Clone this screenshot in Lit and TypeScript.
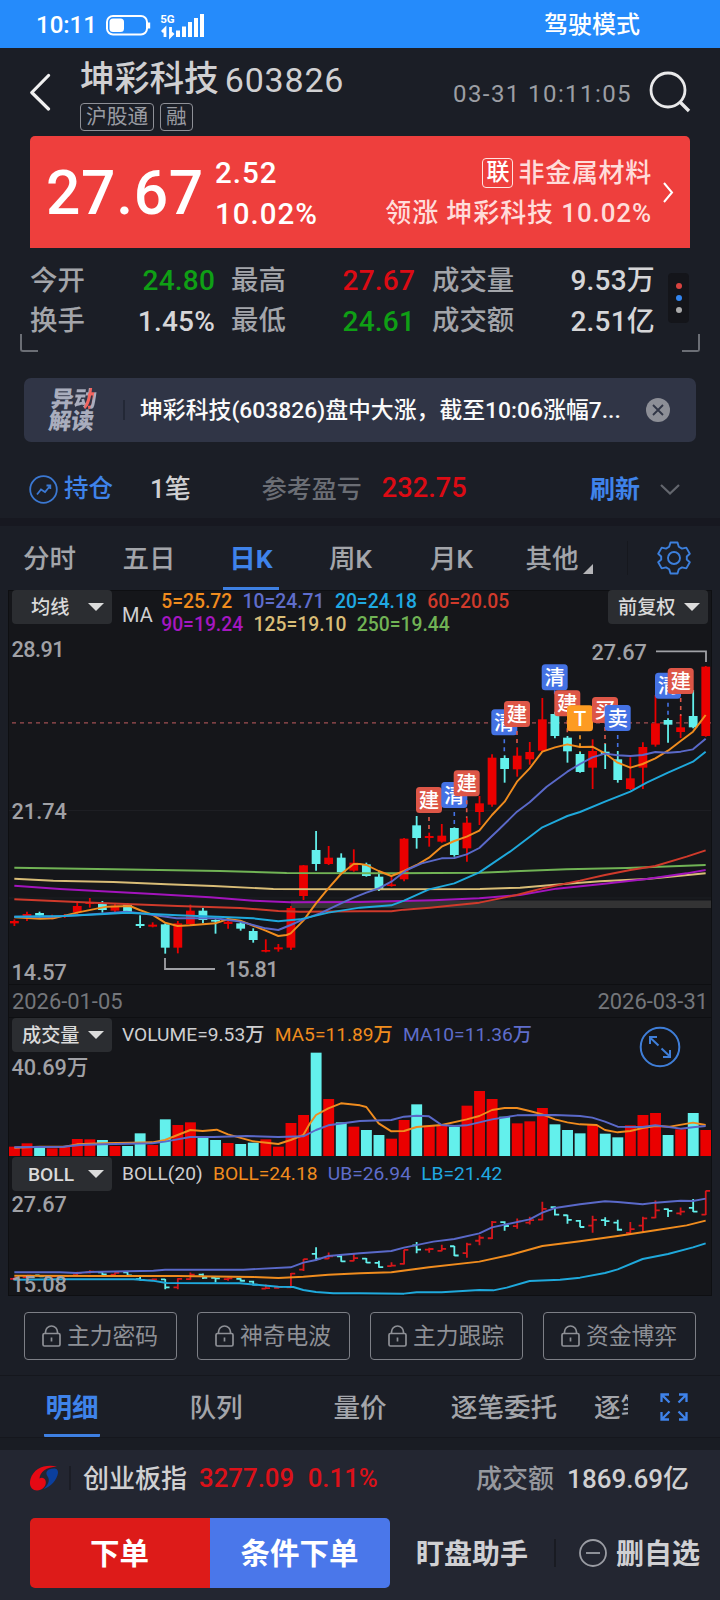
import { LitElement, html, svg, css } from "lit";
import { customElement } from "lit/decorators.js";

// Candle rows: [direction, high, body top, body bottom, low], in third-pixels below y=640.
type Candle = [string, number, number, number, number];
const CANDLES: Candle[] = [
  ["r", 838, 843, 850, 858], ["r", 815, 822, 834, 843], ["c", 815, 819, 827, 833], ["r", 824, 828, 835, 838],
  ["r", 822, 825, 831, 834], ["r", 788, 798, 817, 822], ["r", 774, 786, 792, 803], ["c", 783, 792, 810, 818],
  ["r", 792, 797, 812, 816], ["c", 790, 793, 820, 822], ["c", 826, 852, 858, 864], ["r", 847, 854, 860, 862],
  ["c", 850, 853, 923, 941], ["r", 843, 850, 923, 940], ["r", 794, 812, 852, 858], ["c", 803, 812, 840, 850],
  ["c", 838, 840, 845, 881], ["r", 838, 845, 852, 866], ["c", 845, 850, 866, 872], ["c", 865, 873, 900, 908],
  ["r", 898, 930, 935, 937], ["r", 912, 922, 928, 935], ["r", 798, 804, 923, 930], ["r", 675, 676, 768, 780],
  ["c", 573, 630, 672, 692], ["r", 618, 653, 672, 675], ["c", 640, 653, 697, 700], ["r", 628, 668, 692, 695],
  ["c", 668, 673, 708, 710], ["c", 692, 710, 747, 753], ["r", 705, 733, 738, 740], ["r", 594, 596, 718, 724],
  ["c", 528, 556, 594, 626], ["r", 578, 588, 594, 620], ["r", 552, 587, 605, 608], ["c", 562, 564, 645, 650],
  ["r", 534, 548, 625, 665], ["r", 468, 490, 516, 555], ["r", 343, 353, 494, 500], ["c", 346, 354, 387, 428],
  ["r", 322, 347, 388, 410], ["r", 306, 336, 358, 374], ["r", 174, 238, 332, 336], ["c", 215, 222, 288, 295],
  ["c", 288, 293, 334, 368], ["c", 335, 342, 396, 398], ["r", 298, 333, 383, 447], ["c", 310, 335, 345, 387],
  ["c", 333, 358, 420, 428], ["r", 352, 415, 447, 450], ["r", 307, 321, 383, 447], ["r", 165, 250, 314, 320],
  ["c", 235, 240, 254, 308], ["r", 225, 262, 276, 294], ["c", 150, 228, 262, 265], ["r", 78, 80, 288, 290],
];
// Bar tops in third-pixels below y=980.
const VOLUMES = [
  500, 490, 504, 505, 498, 477, 478, 480, 498, 498, 460, 495, 418, 435, 427, 474, 480, 489, 492, 488, 478, 500, 429,
  405, 218, 357, 427, 440, 450, 465, 476, 420, 373, 437, 437, 440, 377, 333, 357, 410, 430, 424, 384, 433, 450, 460,
  434, 461, 472, 436, 405, 399, 465, 448, 399, 450,
];
const MA: [string, string][] = [
  ["#71b355", "43,683 340,688 660,693 860,699 1180,700 1440,698 1700,688 1880,684 2117,675"],
  ["#d9bd77", "43,716 160,722 340,726 500,733 640,738 820,747 1080,748 1440,747 1560,743 1700,731 1800,724 1940,717 2117,700"],
  ["#a314bd", "43,737 180,747 460,762 630,772 760,782 870,787 1080,786 1174,784 1300,781 1438,775 1560,765 1670,746 1800,733 1940,717 2060,700 2117,690"],
  ["#d03a2b", "43,778 300,789 533,798 720,804 835,813 900,815 1080,814 1174,814 1212,809 1290,803 1363,796 1438,788 1550,765 1627,745 1740,722 1815,705 1891,690 1966,678 2060,650 2117,631"],
  ["#f08c1e", "43,832 120,836 160,835 231,818 320,800 390,798 419,810 457,824 495,848 533,858 571,856 646,850 684,837 721,842 797,872 835,888 860,885 872,880 910,842 948,790 985,745 1023,702 1061,672 1080,672 1099,675 1136,693 1174,708 1212,693 1250,675 1287,653 1325,620 1363,603 1400,590 1438,572 1476,525 1514,485 1551,425 1589,385 1627,335 1665,322 1702,313 1740,321 1777,320 1815,340 1853,368 1891,383 1928,372 1966,355 2004,332 2042,303 2079,275 2098,250 2117,225"],
  ["#5a69c9", "43,830 150,830 260,824 380,815 440,822 530,835 646,835 720,845 797,865 835,870 872,855 910,838 960,820 1023,790 1061,773 1099,758 1136,745 1174,725 1220,690 1265,670 1325,655 1363,654 1400,643 1438,624 1495,570 1551,515 1589,487 1640,440 1702,395 1740,372 1777,352 1815,341 1853,346 1891,348 1928,345 1966,336 2004,338 2042,335 2079,328 2117,296"],
  ["#1fa9dc", "43,830 190,828 300,823 380,818 533,826 650,830 760,835 835,844 900,838 985,818 1080,803 1174,796 1212,782 1287,748 1363,730 1438,697 1530,635 1627,562 1665,545 1702,528 1740,516 1815,485 1891,455 1940,428 2004,398 2079,365 2117,335"],
];
const VOL_MA: [string, string][] = [
  ["#f08c1e", "43,503 120,500 193,500 231,493 307,490 395,488 457,487 495,480 533,465 571,450 608,453 650,449 684,463 760,484 800,488 835,492 872,480 910,465 930,430 948,405 985,385 1023,370 1080,376 1099,381 1136,430 1174,454 1212,453 1250,441 1325,435 1400,418 1438,408 1476,390 1514,384 1551,384 1589,393 1627,403 1665,418 1702,427 1740,433 1790,435 1815,450 1853,457 1891,453 1928,444 1966,438 2010,440 2079,428 2117,435"],
  ["#5a69c9", "43,502 190,500 240,495 307,493 457,490 495,485 571,471 640,471 740,468 835,471 910,469 948,450 985,436 1080,423 1174,420 1212,410 1250,407 1287,409 1325,435 1363,438 1400,436 1476,418 1551,406 1665,405 1740,408 1777,413 1815,425 1853,440 1928,441 1966,436 2042,446 2079,442 2117,438"],
];
const BOLL: [string, string][] = [
  ["#5a69c9", "43,877 180,877 230,879 270,876 460,872 495,869 730,869 872,862 910,848 948,840 985,828 1080,820 1174,813 1212,803 1300,785 1363,777 1438,760 1476,742 1589,718 1627,698 1665,684 1740,673 1815,664 1853,666 1928,673 1966,668 2042,662 2079,663 2117,656"],
  ["#f08c1e", "43,887 300,888 533,888 760,891 835,894 910,890 985,884 1080,880 1174,877 1287,862 1438,845 1530,825 1627,798 1740,784 1853,768 1966,751 2060,736 2117,722"],
  ["#1fa9dc", "43,899 190,898 400,898 457,902 500,909 720,910 835,920 880,921 910,930 948,936 1000,940 1080,940 1212,941 1250,937 1325,937 1438,930 1480,931 1520,923 1589,903 1680,899 1740,893 1815,879 1853,868 1928,837 2004,822 2079,802 2117,790"],
];
// Trade marks: [label, colour, centre x, centre y, stem end y]
const MARKS: [string, string, number, number, number][] = [
  ["建", "#dd5647", 429, 800, 833], ["清", "#4472e4", 454.3, 795, 826], ["建", "#dd5647", 466.7, 783.3, 818],
  ["清", "#4472e4", 504.3, 722.3, 755], ["建", "#dd5647", 517, 714, 747], ["清", "#4472e4", 554.7, 677.3, 690],
  ["建", "#dd5647", 567.3, 703.3, 735], ["T", "#fd9b22", 580, 718.3, 752], ["买", "#dd5647", 605, 710, 744],
  ["卖", "#4472e4", 617.7, 718, 750], ["清", "#4472e4", 668, 685.7, 718], ["建", "#dd5647", 680.7, 681, 716],
];
const RED = "#ea0000";
const CYAN = "#63f0ec";
const tint = (d: string) => (d === "r" ? RED : CYAN);
const cx = (i: number) => 14.4 + 12.57 * i;
const third = (base: number, y: number) => base + y / 3;

const lines = (set: [string, string][], base: number) => svg`
  <g transform=${`translate(0 ${base}) scale(.33333)`} fill="none" stroke-width="5.8" stroke-linejoin="round">
    ${set.map(([c, p]) => svg`<polyline points=${p} stroke=${c}></polyline>`)}
  </g>`;

@customElement("app-root")
export class AppRoot extends LitElement {
  static styles = css`
    :host { display: block; width: 720px; height: 1600px; overflow: hidden; background: #1b1e26; color: #d0d0d2;
      font-family: Roboto, "Noto Sans CJK SC", sans-serif; font-weight: 500; line-height: 1; white-space: nowrap; }
    * { box-sizing: border-box; }
    svg { display: block; flex: none; }
    .row { display: flex; align-items: center; }
    .status { height: 48px; background: #258bfb; color: #fff; padding: 1px 80px 0 36px; font-size: 24px; }
    .clock { width: 70px; font-size: 24px; padding-top: 1px; }
    .five { font-size: 11.5px; font-weight: 700; fill: #fff; }
    .drive { margin-left: auto; }
    .head { height: 88px; padding: 0 29px 0 30px; }
    .title { margin-left: 29px; display: flex; flex-direction: column; gap: 3px; padding-top: 6px; }
    .name { height: 41px; font-size: 34.7px; gap: 6px; }
    .name b { font-weight: 400; font-size: 34px; letter-spacing: .8px; }
    .tags { gap: 6px; font-weight: 400; }
    .tag { height: 28px; border: 1px solid #8e9097; border-radius: 4px; color: #999ba2; font-size: 20.7px; line-height: 26px; padding: 0 5px; }
    .time { margin-left: auto; margin-right: 17px; padding-top: 3px; font-size: 24px; font-weight: 400; letter-spacing: 1.42px; color: #9c9ea4; }
    .card { height: 112px; margin: 0 30px; padding: 0 16px; background: #ee3f3d; border-radius: 5px 5px 0 0; color: #fff; }
    .price { font-size: 60.5px; letter-spacing: .7px; width: 169px; padding-top: 5px; }
    .delta { display: flex; flex-direction: column; gap: 11px; font-size: 29.5px; letter-spacing: 1px; padding-top: 4px; }
    .sector { margin-left: auto; display: flex; flex-direction: column; align-items: flex-end; gap: 7px; margin-right: 11px; font-size: 26px; letter-spacing: .7px; color: #ffdcda; padding-top: 1px; }
    .sector .row { height: 33px; gap: 5px; }
    .sector .lead { letter-spacing: .88px; }
    .link { width: 31px; height: 30px; border: 1px solid #ffe3e1; border-radius: 4px; color: #fff; font-size: 23px; letter-spacing: 0; display: flex; align-items: center; justify-content: center; }
    .stats { height: 102px; display: flex; align-items: flex-start; padding: 13px 30px 0 30px; position: relative; }
    .grid { display: grid; grid-template-columns: 62px 123px 16px 62px 122px 17px 85px 138px; grid-auto-rows: 40.5px; align-items: center; font-size: 27.4px; color: #a3a5aa; }
    .grid i { font-style: normal; font-size: 28px; text-align: right; letter-spacing: .2px; color: #d6d6d8; }
    .grid .g { color: #0f9f15; } .grid .r { color: #dc0b14; }
    .grid .a { grid-column: 1; } .grid .m { grid-column: 4; } .grid .c { grid-column: 7; }
    .dots { margin: 12px 0 0 13px; width: 21px; height: 50px; border-radius: 4px; background: #14151a; display: flex; flex-direction: column; align-items: center; justify-content: center; gap: 6px; }
    .dots span { width: 6px; height: 6px; border-radius: 50%; background: #aaa; }
    .dots .d1 { background: #d8433f; } .dots .d2 { background: #3285f0; }
    .corner { position: absolute; top: 86px; width: 18px; height: 18px; border-bottom: 2px solid #6b6e75; }
    .cl { left: 20px; border-left: 2px solid #6b6e75; border-radius: 0 0 0 3px; }
    .cr { right: 20px; border-right: 2px solid #6b6e75; border-radius: 0 0 3px 0; }
    .news { height: 64px; margin: 28px 24px 0; background: #303546; border-radius: 7px; padding: 0 26px 0 26px; }
    .logo { width: 73px; font-size: 22.7px; line-height: 22px; font-weight: 900; color: #a9adbd; transform: skewX(-7deg); padding-top: 2px; }
    .logo em { font-style: normal; background: linear-gradient(100deg, #a9adbd 54%, #f2655f 56%, #f2655f 76%, #a9adbd 78%); -webkit-background-clip: text; background-clip: text; color: transparent; }
    .news .bar { width: 2px; height: 20px; background: #232836; }
    .news p { margin: 0 0 0 15px; padding-top: 3px; color: #fafafa; font-size: 22.85px; }
    .news svg { margin-left: auto; }
    .hold { height: 92px; padding: 2px 40px 0 29px; }
    .hold .h1 { font-size: 24.5px; margin-left: 6px; padding-top: 1px; }
    .hold .h2 { font-size: 26px; margin-left: 37px; }
    .hold .h3 { font-size: 25px; margin-left: 71px; color: #6b6e75; }
    .hold .h4 { font-size: 27.2px; margin-left: 20px; color: #dc0b14; }
    .hold .h5 { font-size: 25px; margin-left: auto; margin-right: 20px; font-weight: 700; }
    .blue { color: #3f83ea; }
    .sep { height: 8px; margin-top: -16px; background: #171820; }
    .ktabs { height: 64px; font-size: 26.5px; color: #a3a5aa; display: grid; grid-template-columns: 99px 100px 104px 95px 107px 122px 93px; align-items: center; }
    .ktabs > span { text-align: center; padding-top: 3px; }
    .ktabs .on { color: #3f83ea; font-weight: 700; align-self: stretch; display: flex; align-items: center; justify-content: center; justify-self: center; width: 56px; border-bottom: 3px solid #3e80e2; padding-top: 5px; }
    .ktabs .other { padding-right: 24px; }
    .other svg { display: inline-block; margin: 0 -10px 0 4px; vertical-align: -6px; }
    .ktabs .gear { border-left: 1px solid #16181e; display: flex; justify-content: center; }
    .chart { margin: 0 8px; background: #15161a; border-left: 1px solid #0e0f12; border-right: 1px solid #0e0f12; }
    .pane { display: grid; grid-template-columns: 702px; }
    .pane > * { grid-area: 1 / 1; }
    .bar1 { height: 34px; padding: 0 3px; align-self: start; font-size: 19.3px; }
    .sel { width: 100px; height: 34px; border-radius: 4px; background: #2b2d31; color: #dadada; font-size: 19.2px; display: flex; align-items: center; justify-content: space-between; padding: 2px 8px 0 10px; }
    .sel.n { padding-left: 19px; } .sel.w { padding-left: 16px; }
    .tri { width: 0; height: 0; border: 8px solid transparent; border-top: 8px solid #dcdcdc; border-bottom: 0; margin-bottom: 2px; }
    .leg { margin-left: 10px; gap: 10.3px; color: #cfcfd1; height: 32px; font-weight: 450; font-size: 19.2px; }
    .ma { padding-top: 14px; font-size: 20px; }
    .two { margin-left: 8.5px; display: grid; grid-template-rows: 24px 22px; align-self: flex-start; align-items: center; }
    .two .row { gap: 10.4px; }
    .right { margin-left: auto; }
    .o { color: #f08c1e; } .p { color: #5f6dcb; } .b { color: #20a9e2; } .rd { color: #d03a2b; } .v { color: #a517c0; } .y { color: #d9bd77; } .gn { color: #71b355; }
    .dates { height: 34px; border: solid #0e0f12; border-width: 1px 0; padding: 2px 3px 0 3px; justify-content: space-between; font-size: 21.9px; font-weight: 400; color: #74767b; }
    text { font-size: 21.7px; fill: #a0a1a6; }
    .mk { font-size: 20.5px; fill: #fff; text-anchor: middle; }
    .locks { display: grid; grid-template-columns: repeat(4, 153px); gap: 20px; padding: 16px 24px; height: 80px; border-bottom: 1px solid #15171d; }
    .lock { height: 48px; border: 1px solid #7d7f86; border-radius: 4px; justify-content: center; gap: 6px; font-size: 22.8px; font-weight: 400; color: #8e9096; padding-right: 1px; }
    .lock span { padding-top: 3px; }
    .dtabs { height: 61px; font-size: 26.6px; color: #a3a5aa; display: grid; grid-template-columns: 144px 144px 144px 144px 52px 92px; align-items: center; text-align: center; line-height: 40px; }
    .dtabs > span { padding-top: 2px; }
    .dtabs .on { color: #3f83ea; font-weight: 700; height: 61px; width: 56px; justify-self: center; border-bottom: 3px solid #3e80e2; border-radius: 1px; line-height: 60px; }
    .dtabs .cut { overflow: hidden; text-align: left; padding-left: 18px; }
    .dtabs svg { justify-self: center; }
    .band { height: 13px; background: #191c23; border-top: 1px solid #15171d; }
    .foot { background: #232631; height: 150px; }
    .index { height: 56px; padding: 0 31px 0 29px; font-size: 26px; }
    .index span { padding-top: 1px; }
    .index .bar { width: 2px; height: 24px; background: #1b1d25; margin: 0 12px 0 10px; }
    .index .val { margin-left: 13px; font-size: 26px; }
    .up { color: #dc1119; font-size: 25.8px; }
    .u1 { margin-left: 12px; } .u2 { margin-left: 13.5px; }
    .grey { color: #96989e; }
    .acts { margin-top: 12px; padding: 0 20px 0 30px; height: 70px; font-weight: 700; }
    .buy { width: 180px; height: 70px; display: flex; align-items: center; justify-content: center; color: #fff; font-size: 29.5px; background: #dd1b19; border-radius: 5px 0 0 5px; padding: 4px 1px 0 0; }
    .cond { background: #4a77ea; border-radius: 0 5px 5px 0; }
    .acts .t { font-size: 28px; color: #d0d0d3; padding-top: 3px; }
    .acts .t1 { margin-left: 26px; } .acts .t2 { margin-left: 9px; }
    .acts .bar { width: 2px; height: 28px; background: #191b22; margin: 0 23px 0 26px; }
  `;

  private select(label: string, kind = "") {
    return html`<div class="sel ${kind}"><span>${label}</span><span class="tri"></span></div>`;
  }

  private mainPane() {
    return html`<svg width="702" height="394" viewBox="9 590 702 394">
      <path d="M9 590.5H711" stroke="#0e0f12" />
      <path d="M9 810.5H711M9 898H711" stroke="#1d1e23" />
      <path d="M291 900.5H711V908H291Z" fill="#333334" />
      <path d="M12 722.8H711" stroke="#a04f52" stroke-dasharray="4 4" stroke-width="1.3" />
      ${CANDLES.map(([d, h, t, b, l], i) => svg`
        <path d="M${cx(i)} ${third(640, h)}V${third(640, l)}" stroke=${tint(d)} stroke-width="1.8"></path>
        <rect x=${cx(i) - 4.4} y=${third(640, t)} width="8.8" height=${(b - t) / 3} fill=${tint(d)}></rect>`)}
      ${lines(MA, 640)}
      ${MARKS.map(([s, c, x, y, e]) => svg`
        <path d="M${x} ${y + 17}V${e}" stroke=${c} stroke-width="1.6" stroke-dasharray="4 4"></path>
        <rect x=${x - 13} y=${y - 13} width="26" height="26" rx="3.5" fill=${c}></rect>
        <text class="mk" x=${x} y=${y + 7.6}>${s}</text>`)}
      <path d="M165 958V969H215M656 651.3H706V662" fill="none" stroke="#a0a1a6" stroke-width="1.8" />
      <text x="11.5" y="657" textLength="53">28.91</text><text x="11.5" y="819">21.74</text><text x="11.5" y="979.7">14.57</text>
      <text x="225.5" y="976.7" textLength="53">15.81</text><text x="591.5" y="660">27.67</text>
    </svg>`;
  }

  private volumePane() {
    return html`<svg width="702" height="139" viewBox="9 1018 702 139">
      ${VOLUMES.map((v, i) => svg`<rect x=${cx(i) - 5.4} y=${third(980, v)} width="10.9" height=${(528 - v) / 3} fill=${tint(CANDLES[i][0])}></rect>`)}
      ${lines(VOL_MA, 980)}
      <text x="11.5" y="1075">40.69万</text>
      <g fill="none" stroke="#3f7ed8" stroke-width="2"><circle cx="660" cy="1047" r="19.3" />
        <path d="M658.5 1045.5L650 1037.5M650 1044V1037H657M661.5 1048.5L670 1056.5M670 1050V1057H663" /></g>
    </svg>`;
  }

  private bollPane() {
    const q = (y: number) => third(980, 632 + 0.343 * (y - 78));
    return html`<svg width="702" height="139" viewBox="9 1157 702 139">
      <path d="M9 1295.5H711" stroke="#0e0f12" />
      ${CANDLES.map(([d, h, t, b, l], i) => {
        const open = q(d === "r" ? b : t), close = q(d === "r" ? t : b);
        return svg`<path d="M${cx(i)} ${q(h)}V${q(l)}M${cx(i) - 4.3} ${open}H${cx(i)}M${cx(i)} ${close}H${cx(i) + 4.3}" stroke=${d === "r" ? "#d8161a" : CYAN} stroke-width="1.8"></path>`;
      })}
      ${lines(BOLL, 980)}
      <text x="11.5" y="1212">27.67</text><text x="11.5" y="1291.7">15.08</text>
    </svg>`;
  }

  render() {
    return html`
      <div class="row status"><span class="clock">10:11</span>
        <svg width="100" height="34" viewBox="106 7 100 34">
          <rect x="107" y="15" width="40" height="18.5" rx="6" fill="none" stroke="#fff" stroke-width="2" /><rect x="109.500" y="17.500" width="14.500" height="13.500" rx="3.500" fill="#fff" /><path d="M149 21.5v6" stroke="#fff" stroke-width="2.4" />
          <path d="M165 36V28L162 31M170.500 26V35L173.500 32" fill="none" stroke="#fff" stroke-width="2.800" />
          <path d="M178 36V29.500M184 36V25.500M190 36V21M196 36V17M202 36V13" stroke="#fff" stroke-width="4" />
          <text class="five" x="160.200" y="21.500">5G</text>
        </svg>
        <span class="drive">驾驶模式</span></div>
      <div class="row head">
        <svg width="21" height="38" viewBox="0 0 21 38"><path d="M18.500 2.500L1.800 19.500L18.500 36" fill="none" stroke="#f0f0f0" stroke-width="3.200" stroke-linecap="round" stroke-linejoin="round" /></svg>
        <div class="title"><div class="row name"><span>坤彩科技</span><b>603826</b></div>
          <div class="row tags"><span class="tag">沪股通</span><span class="tag">融</span></div></div>
        <span class="time">03-31 10:11:05</span>
        <svg width="42" height="42" viewBox="0 0 42 42"><g fill="none" stroke="#e9e9ea" stroke-width="2.8"><circle cx="19" cy="19" r="17" /><path d="M31 31L40 40" stroke-width="3.4" /></g></svg>
      </div>
      <div class="row card"><span class="price">27.67</span><div class="delta"><span>2.52</span><span>10.02%</span></div>
        <div class="sector"><div class="row"><span class="link">联</span><span>非金属材料</span></div><div class="row lead">领涨 坤彩科技 10.02%</div></div>
        <svg width="11" height="21" viewBox="0 0 11 21"><path d="M1 1L9 10.500L1 20" fill="none" stroke="#fff" stroke-width="2" /></svg>
      </div>
      <div class="stats"><div class="grid">
          <span class="a">今开</span><i class="g">24.80</i><span class="m">最高</span><i class="r">27.67</i><span class="c">成交量</span><i>9.53万</i>
          <span class="a">换手</span><i>1.45%</i><span class="m">最低</span><i class="g">24.61</i><span class="c">成交额</span><i>2.51亿</i>
        </div><div class="dots"><span class="d1"></span><span class="d2"></span><span></span></div>
        <span class="corner cl"></span><span class="corner cr"></span></div>
      <div class="row news"><div class="logo">异<em>动</em><br />解读</div><span class="bar"></span><p>坤彩科技(603826)盘中大涨，截至10:06涨幅7...</p>
        <svg width="24" height="24" viewBox="0 0 24 24"><circle cx="12" cy="12" r="12" fill="#8d8f97" /><path d="M7 7L17 17M17 7L7 17" stroke="#303546" stroke-width="1.8" /></svg></div>
      <div class="row hold">
        <svg width="29" height="29" viewBox="0 0 29 29"><g fill="none" stroke="#3b78d2" stroke-width="1.8"><circle cx="14.500" cy="14.500" r="13.300" /><path d="M8 19.500L12 14.500L16 17L21 11M17.500 10.500H21.300V14" /></g></svg>
        <span class="blue h1">持仓</span><span class="h2">1笔</span><span class="h3">参考盈亏</span><span class="h4">232.75</span><span class="blue h5">刷新</span>
        <svg width="20" height="11" viewBox="0 0 20 11"><path d="M1 1L10 9.500L19 1" fill="none" stroke="#63666d" stroke-width="2.200" /></svg>
      </div>
      <div class="sep"></div>
      <div class="ktabs"><span>分时</span><span>五日</span><span class="on">日K</span><span>周K</span><span>月K</span>
        <span class="other">其他<svg width="10" height="10" viewBox="0 0 10 10"><path d="M10 0V10H0Z" fill="#b5b5b8" /></svg></span>
        <div class="gear"><svg width="34" height="34" viewBox="-17 -17 34 34"><g fill="none" stroke="#3c7fdc" stroke-width="1.900" stroke-linejoin="round"><circle r="6" />
          <path d="M-3.500-15.500H3.500L4.800-11.300L8-9.400L12.300-10.400L15.800-4.300L12.800-1.500V1.500L15.800 4.300L12.300 10.400L8 9.400L4.800 11.300L3.500 15.500H-3.500L-4.800 11.300L-8 9.400L-12.300 10.400L-15.800 4.300L-12.800 1.500V-1.500L-15.800-4.300L-12.300-10.400L-8-9.400L-4.800-11.300Z" /></g></svg></div>
      </div>
      <div class="chart">
        <div class="pane">${this.mainPane()}
          <div class="row bar1">${this.select("均线", "n")}<span class="leg ma">MA</span>
            <div class="two"><div class="row"><span class="o">5=25.72</span><span class="p">10=24.71</span><span class="b">20=24.18</span><span class="rd">60=20.05</span></div>
              <div class="row"><span class="v">90=19.24</span><span class="y">125=19.10</span><span class="gn">250=19.44</span></div></div>
            <div class="right">${this.select("前复权")}</div></div></div>
        <div class="row dates"><span>2026-01-05</span><span>2026-03-31</span></div>
        <div class="pane">${this.volumePane()}
          <div class="row bar1">${this.select("成交量")}<div class="row leg"><span>VOLUME=9.53万</span><span class="o">MA5=11.89万</span><span class="p">MA10=11.36万</span></div></div></div>
        <div class="pane">${this.bollPane()}
          <div class="row bar1">${this.select("BOLL", "w")}<div class="row leg"><span>BOLL(20)</span><span class="o">BOLL=24.18</span><span class="p">UB=26.94</span><span class="b">LB=21.42</span></div></div></div>
      </div>
      <div class="locks">${["主力密码", "神奇电波", "主力跟踪", "资金博弈"].map((t) => html`<div class="row lock">
        <svg width="19" height="22" viewBox="0 0 19 22"><g fill="none" stroke="#8e9096" stroke-width="1.700"><rect x="1" y="8.500" width="17" height="12.500" rx="1.500" /><path d="M3.500 8.500V7A6 6 0 0 1 15.500 7V8.500M9.500 12.500V16.500" /></g></svg><span>${t}</span></div>`)}</div>
      <div class="dtabs"><span class="on">明细</span><span>队列</span><span>量价</span><span>逐笔委托</span><span class="cut">逐笔</span>
        <svg width="28" height="28" viewBox="0 0 28 28"><path d="M1.500 9V1.500H9M1.500 1.500L9.500 9.500M19 1.500H26.500V9M26.500 1.500L18.500 9.500M1.500 19V26.500H9M1.500 26.500L9.500 18.500M19 26.500H26.500V19M26.500 26.500L18.500 18.500" fill="none" stroke="#3f83ea" stroke-width="2.300" /></svg></div>
      <div class="band"></div>
      <div class="foot">
        <div class="row index">
          <svg width="30" height="26" viewBox="0 0 30 26"><path d="M28 1.500C16-1 5 3 1.500 14C-.500 21 3 25.500 8 25.500C14 25.500 18 20 16.500 15.500C15.500 12.500 12.500 12 10.500 13.500C11 7 17 2 28 1.500Z" fill="#e50914" /><path d="M20 4.500C25 2.500 29.500 3 29 8C28 15 22 21.500 14.500 24C19 20 21 16 19 12C17 9.500 16.500 6.500 20 4.500Z" fill="#0b3f9d" /></svg>
          <span class="bar"></span><span>创业板指</span><span class="up u1">3277.09</span><span class="up u2">0.11%</span>
          <span class="grey right">成交额</span><span class="val">1869.69亿</span></div>
        <div class="row acts"><span class="buy">下单</span><span class="buy cond">条件下单</span><span class="t t1">盯盘助手</span><span class="bar"></span>
          <svg width="28" height="28" viewBox="0 0 28 28"><g fill="none" stroke="#9a9ca3" stroke-width="1.800"><circle cx="14" cy="14" r="13" /><path d="M7 14H21" /></g></svg>
          <span class="t t2">删自选</span></div>
      </div>`;
  }
}
